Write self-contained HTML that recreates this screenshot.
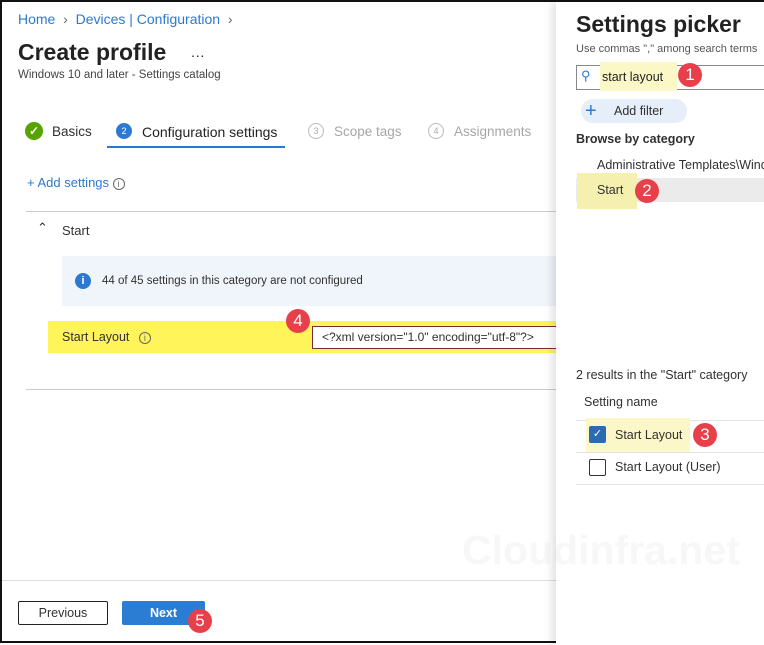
<!DOCTYPE html>
<html><head><style>
*{margin:0;padding:0;box-sizing:border-box}
body{width:764px;height:643px;overflow:hidden;background:#fff;font-family:"Liberation Sans",sans-serif;color:#323130;position:relative;border:2px solid #111}
.a{position:absolute;white-space:nowrap}
.b{position:absolute;width:24px;height:24px;border-radius:50%;background:#e8404a;color:#fff;font-size:17px;text-align:center;line-height:24px}
</style></head><body>
<div class="a" style="left:16px;top:9px;font-size:14px;color:#2b79d0">Home <span style="color:#666">&nbsp;›&nbsp;</span> Devices | Configuration <span style="color:#666">&nbsp;›</span></div>
<div class="a" style="left:16px;top:37px;font-size:23px;font-weight:bold;color:#222">Create profile <span style="font-weight:normal;font-size:14px;margin-left:18px">···</span></div>
<div class="a" style="left:16px;top:67px;font-size:11.5px;color:#444">Windows 10 and later - Settings catalog</div>
<div class="a" style="left:23px;top:120px;width:18px;height:18px;border-radius:50%;background:#57a300;color:#fff;font-size:12px;text-align:center;line-height:18px;font-weight:bold">✓</div>
<div class="a" style="left:50px;top:122px;font-size:13.5px">Basics</div>
<div class="a" style="left:114px;top:121px;width:16px;height:16px;border-radius:50%;background:#2b79d0;color:#fff;font-size:9px;text-align:center;line-height:16px">2</div>
<div class="a" style="left:140px;top:122px;font-size:14px;color:#222">Configuration settings</div>
<div class="a" style="left:105px;top:144px;width:178px;height:2px;background:#2b79d0"></div>
<div class="a" style="left:306px;top:121px;width:16px;height:16px;border-radius:50%;border:1px solid #bbb;color:#aaa;font-size:9px;text-align:center;line-height:14px">3</div>
<div class="a" style="left:332px;top:122px;font-size:13.5px;color:#a6a6a6">Scope tags</div>
<div class="a" style="left:426px;top:121px;width:16px;height:16px;border-radius:50%;border:1px solid #bbb;color:#aaa;font-size:9px;text-align:center;line-height:14px">4</div>
<div class="a" style="left:452px;top:122px;font-size:13.5px;color:#a6a6a6">Assignments</div>
<div class="a" style="left:25px;top:173px;font-size:13px;color:#2b79d0">+ Add settings <span style="color:#666;font-size:11px;border:1px solid #666;border-radius:50%;display:inline-block;width:12px;height:12px;line-height:11px;text-align:center;font-size:9px">i</span></div>
<div class="a" style="left:24px;top:209px;width:532px;height:1px;background:#ccc"></div>
<div class="a" style="left:35px;top:218px;font-size:13px">⌃</div>
<div class="a" style="left:60px;top:221px;font-size:13px">Start</div>
<div class="a" style="left:60px;top:254px;width:496px;height:50px;background:#f0f4fb"></div>
<div class="a" style="left:73px;top:271px;width:16px;height:16px;border-radius:50%;background:#2b79d0;color:#fff;font-size:11px;font-weight:bold;text-align:center;line-height:16px">i</div>
<div class="a" style="left:100px;top:273px;font-size:11.5px">44 of 45 settings in this category are not configured</div>
<div class="a" style="left:46px;top:319px;width:510px;height:32px;background:#fff55a"></div>
<div class="a" style="left:60px;top:328px;font-size:12.5px">Start Layout <span style="color:#666;font-size:9px;border:1px solid #666;border-radius:50%;display:inline-block;width:12px;height:12px;line-height:11px;text-align:center;margin-left:6px">i</span></div>
<div class="a" style="left:310px;top:324px;width:250px;height:23px;border:1px solid #7a2a3a;background:#fff;font-size:12px;padding:3px 0 0 9px">&lt;?xml version="1.0" encoding="utf-8"?&gt;</div>
<div class="b" style="left:284px;top:307px">4</div>
<div class="a" style="left:24px;top:387px;width:532px;height:1px;background:#ccc"></div>
<div class="a" style="left:0;top:578px;width:556px;height:1px;background:#ddd"></div>
<div class="a" style="left:16px;top:599px;width:90px;height:24px;border:1px solid #222;border-radius:2px;font-size:12.5px;text-align:center;line-height:22px">Previous</div>
<div class="a" style="left:120px;top:599px;width:83px;height:24px;background:#2b7cd3;border-radius:2px;color:#fff;font-size:12.5px;text-align:center;line-height:24px;font-weight:bold">Next</div>
<div class="b" style="left:186px;top:607px">5</div>

<div class="a" style="left:554px;top:0;width:210px;height:643px;background:#fff;box-shadow:-4px 0 8px rgba(0,0,0,.12)"></div>
<div class="a" style="left:574px;top:9px;font-size:23px;font-weight:bold;color:#222">Settings picker</div>
<div class="a" style="left:574px;top:41px;font-size:11px;color:#555">Use commas "," among search terms</div>
<div class="a" style="left:574px;top:63px;width:200px;height:25px;border:1px solid #888"></div>
<div class="a" style="left:598px;top:60px;width:77px;height:29px;background:#fbf7c6"></div>
<div class="a" style="left:579px;top:66px;font-size:13px;color:#2b79d0;transform:scaleX(-1)">⚲</div>
<div class="a" style="left:600px;top:68px;font-size:12.5px;color:#222">start layout</div>
<div class="b" style="left:676px;top:61px">1</div>
<div class="a" style="left:579px;top:97px;width:106px;height:24px;border-radius:12px;background:#e5eef9"></div>
<div class="a" style="left:583px;top:97px;font-size:20px;color:#2b79d0;line-height:24px">+</div>
<div class="a" style="left:612px;top:102px;font-size:12.5px">Add filter</div>
<div class="a" style="left:574px;top:130px;font-size:12.5px;font-weight:bold">Browse by category</div>
<div class="a" style="left:595px;top:156px;font-size:12.5px">Administrative Templates\Windows</div>
<div class="a" style="left:574px;top:176px;width:190px;height:24px;background:#ebebeb"></div>
<div class="a" style="left:575px;top:171px;width:60px;height:36px;background:#f5f0b0"></div>
<div class="a" style="left:595px;top:181px;font-size:12.5px">Start</div>
<div class="b" style="left:633px;top:177px">2</div>
<div class="a" style="left:574px;top:366px;font-size:12.5px">2 results in the "Start" category</div>
<div class="a" style="left:582px;top:393px;font-size:12.5px">Setting name</div>
<div class="a" style="left:574px;top:418px;width:190px;height:1px;background:#e3e3e3"></div>
<div class="a" style="left:574px;top:450px;width:190px;height:1px;background:#e3e3e3"></div>
<div class="a" style="left:574px;top:482px;width:190px;height:1px;background:#e3e3e3"></div>
<div class="a" style="left:584px;top:416px;width:104px;height:34px;background:#fcf7c8"></div>
<div class="a" style="left:587px;top:424px;width:17px;height:17px;background:#2b6cb0;border-radius:2px;color:#fff;font-size:11px;text-align:center;line-height:17px">✓</div>
<div class="a" style="left:613px;top:426px;font-size:12.5px">Start Layout</div>
<div class="b" style="left:691px;top:421px">3</div>
<div class="a" style="left:587px;top:457px;width:17px;height:17px;border:1.5px solid #333;border-radius:2px"></div>
<div class="a" style="left:613px;top:458px;font-size:12.5px">Start Layout (User)</div>
<div class="a" style="left:460px;top:525px;font-size:41px;font-weight:bold;color:rgba(200,200,200,0.14)">Cloudinfra.net</div>
</body></html>
